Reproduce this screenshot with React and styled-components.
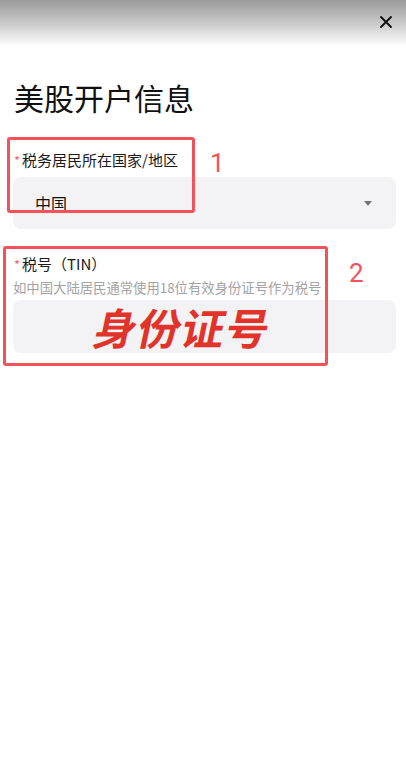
import React from "react";
import styled, { createGlobalStyle } from "styled-components";

const GlobalStyle = createGlobalStyle`
  body {
    margin: 0;
    background: #ffffff;
    font-family: "Noto Sans CJK SC", "Noto Sans", sans-serif;
    color: #111111;
  }
`;

const fields = [
  {
    id: 1,
    label: "税务居民所在国家/地区",
    kind: "select",
    value: "中国",
  },
  {
    id: 2,
    label: "税号（TIN）",
    hint: "如中国大陆居民通常使用18位有效身份证号作为税号",
    kind: "input",
    value: "身份证号",
  },
];

function App() {
  return (
    <Page>
      <GlobalStyle />
      <Header>
        <CloseButton aria-label="关闭">
          <svg width="14" height="14" viewBox="0 0 14 14">
            <path
              d="M2 2 L12 12 M12 2 L2 12"
              stroke="#111"
              strokeWidth="1.9"
              strokeLinecap="round"
            />
          </svg>
        </CloseButton>
      </Header>
      <Title>美股开户信息</Title>
      <Form>
        {fields.map((field) => (
          <Field key={field.id} $kind={field.kind}>
            <Label>
              <Star>*</Star>
              {field.label}
            </Label>
            {field.hint && <Hint>{field.hint}</Hint>}
            {field.kind === "select" ? (
              <SelectBox>
                <SelectValue>{field.value}</SelectValue>
                <Caret />
              </SelectBox>
            ) : (
              <InputBox>
                <StampText>{field.value}</StampText>
              </InputBox>
            )}
            <MarkBox $kind={field.kind} />
            <MarkNumber $kind={field.kind}>{field.id}</MarkNumber>
          </Field>
        ))}
      </Form>
    </Page>
  );
}

export default App;

const Page = styled.div`
  width: 406px;
  min-height: 770px;
  background: #ffffff;
`;

const Header = styled.div`
  height: 46px;
  display: flex;
  justify-content: flex-end;
  align-items: flex-start;
  background: linear-gradient(to bottom, #9a9a9a 0%, #c4c4c4 45%, #ffffff 100%);
`;

const CloseButton = styled.button`
  border: none;
  background: transparent;
  padding: 0;
  width: 14px;
  height: 14px;
  margin: 15px 13px 0 0;
  display: flex;
  cursor: pointer;
`;

const Title = styled.h1`
  margin: 31px 0 0;
  padding-left: 14px;
  font-size: 30px;
  line-height: 40px;
  font-weight: 400;
  color: #111;
`;

const Form = styled.div`
  display: flex;
  flex-direction: column;
  gap: 25px;
  padding: 33px 10px 0 13px;
`;

const Field = styled.div`
  position: relative;
  display: flex;
  flex-direction: column;
`;

const Label = styled.div`
  font-size: 15px;
  line-height: 20px;
  color: #1a1a1a;
  display: flex;
  align-items: flex-start;
  margin-bottom: 7px;
`;

const Star = styled.span`
  color: #e8687a;
  font-size: 13px;
  line-height: 16px;
  margin: 3px 2px 0 1px;
`;

const Hint = styled.div`
  font-size: 13.35px;
  line-height: 16px;
  color: #a3a3a3;
  margin: -1px 0 4px;
  white-space: nowrap;
`;

const SelectBox = styled.div`
  height: 52px;
  border-radius: 8px;
  background: #f3f3f5;
  display: flex;
  align-items: center;
  justify-content: space-between;
  padding: 0 24px 0 22px;
`;

const SelectValue = styled.span`
  font-size: 16px;
  line-height: 20px;
  color: #111;
`;

const Caret = styled.span`
  width: 0;
  height: 0;
  border-left: 4.5px solid transparent;
  border-right: 4.5px solid transparent;
  border-top: 5px solid #777;
`;

const InputBox = styled.div`
  height: 53px;
  border-radius: 8px;
  background: #f3f3f5;
  display: flex;
  align-items: center;
  padding-left: 82px;
`;

const StampText = styled.span`
  font-size: 43px;
  line-height: 53px;
  font-weight: 700;
  letter-spacing: 1px;
  color: #e2332b;
  display: inline-block;
  transform: skewX(-12deg);
`;

const MarkBox = styled.div`
  position: absolute;
  border: 3px solid #f4525a;
  border-radius: 3px;
  pointer-events: none;
  ${({ $kind }) =>
    $kind === "select"
      ? `left: -6px; top: -13px; width: 182px; height: 70px;`
      : `left: -10px; top: -8px; width: 319px; height: 114px;`}
`;

const MarkNumber = styled.span`
  position: absolute;
  font-family: Roboto, "Noto Sans", sans-serif;
  font-size: 26px;
  line-height: 30px;
  color: #f4525a;
  ${({ $kind }) =>
    $kind === "select" ? `left: 197px; top: -2px;` : `left: 336px; top: 4px;`}
`;
